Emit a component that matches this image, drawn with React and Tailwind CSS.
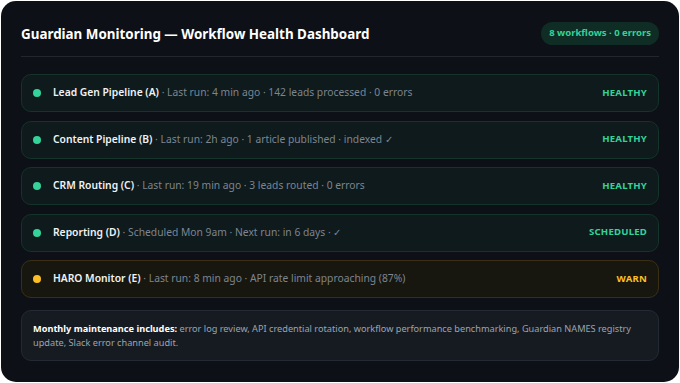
const workflows = [
    { name: 'Lead Gen Pipeline (A)', meta: 'Last run: 4 min ago · 142 leads processed · 0 errors', status: 'HEALTHY', tone: 'ok' },
    { name: 'Content Pipeline (B)', meta: 'Last run: 2h ago · 1 article published · indexed ✓', status: 'HEALTHY', tone: 'ok' },
    { name: 'CRM Routing (C)', meta: 'Last run: 19 min ago · 3 leads routed · 0 errors', status: 'HEALTHY', tone: 'ok' },
    { name: 'Reporting (D)', meta: 'Scheduled Mon 9am · Next run: in 6 days · ✓', status: 'SCHEDULED', tone: 'ok' },
    { name: 'HARO Monitor (E)', meta: 'Last run: 8 min ago · API rate limit approaching (87%)', status: 'WARN', tone: 'warn' },
];

function WorkflowRow({ wf }) {
    const warn = wf.tone === 'warn';
    return (
        <div
            className={`h-[38px] flex items-center px-[11px] rounded-[10px] border ${
                warn ? 'bg-[#18170f] border-[#3a2f14]' : 'bg-[#0e1a1c] border-[#143329]'
            }`}
        >
            <span className={`w-2 h-2 rounded-full mr-3 shrink-0 ${warn ? 'bg-[#fbbf24]' : 'bg-[#34d399]'}`} />
            <div className="flex-1 truncate text-[10.3px]">
                <span className="font-semibold text-[#f0f3f6]">{wf.name}</span>
                <span className="text-[#7d8590]"> · {wf.meta}</span>
            </div>
            <span className={`text-[9.6px] font-bold tracking-[0.2px] ${warn ? 'text-[#fbbf24]' : 'text-[#34d399]'}`}>
                {wf.status}
            </span>
        </div>
    );
}

export default function App() {
    return (
        <div className="w-[680px] h-[383px] bg-white p-[1px]" style={{ fontFamily: '"Noto Sans", "Open Sans", sans-serif' }}>
            <div className="w-[678px] h-[381px] bg-[#0d1117] rounded-[15px] px-[20px] pt-[21px]">
                <div className="flex items-center justify-between pb-[11px] border-b border-[#22272e]">
                    <h1 className="text-[13.4px] font-bold text-white pt-[1px]">Guardian Monitoring — Workflow Health Dashboard</h1>
                    <span className="h-[23px] px-[8px] flex items-center rounded-full bg-[#0f2d24] text-[#34d399] text-[9.5px] font-bold">
                        8 workflows · 0 errors
                    </span>
                </div>
                <div className="flex flex-col gap-[8.5px] mt-[17px]">
                    {workflows.map((wf) => (
                        <WorkflowRow key={wf.name} wf={wf} />
                    ))}
                </div>
                <div className="mt-[12px] h-[51px] rounded-[10px] bg-[#161b22] border border-[#242a33] px-[11px] pt-[11px] text-[9.2px] leading-[14px] text-[#9aa4b0]">
                    <span className="font-bold text-white">Monthly maintenance includes:</span> error log review, API credential rotation, workflow
                    performance benchmarking, Guardian NAMES registry update, Slack error channel audit.
                </div>
            </div>
        </div>
    );
}
